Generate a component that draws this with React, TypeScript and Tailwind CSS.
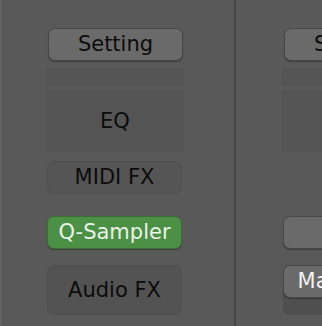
const font = { fontFamily: '"DejaVu Sans", "Liberation Sans", sans-serif' };

function GreyButton({ label, light }: { label?: string; light?: boolean }) {
  return (
    <div
      className={`ml-[1px] w-[135px] h-[33px] rounded-[7px] border border-[#474747] bg-[#6a6a6a] shadow-[0_1px_1px_rgba(0,0,0,0.3)] flex items-center justify-center whitespace-nowrap overflow-visible text-[21px] leading-none ${
        light ? 'text-[#f2f2f2]' : 'text-[#0c0c0c]'
      }`}
    >
      {label}
    </div>
  );
}

function Slot({ h, label }: { h: string; label?: string }) {
  return (
    <div className={`w-[138px] ${h} bg-[#545454] flex items-center justify-center text-[21px] leading-none text-[#0c0c0c]`}>
      {label}
    </div>
  );
}

function Strip({ pad, left }: { pad: string; left: boolean }) {
  return (
    <div className={`flex flex-col pt-[28px] ${pad} shrink-0`}>
      <div className="ml-[1px]">
        <GreyButton label="Setting" />
      </div>
      <div className="mt-[7px]">
        <Slot h="h-[18px]" />
      </div>
      <div className="mt-[4px]">
        <Slot h="h-[62px]" label={left ? 'EQ' : undefined} />
      </div>
      {left ? (
        <>
          <div className="mt-[9px] ml-[1px] w-[135px] h-[33px] rounded-[7px] border border-[#505050] bg-[#555555] flex items-center justify-center text-[21px] leading-none text-[#0c0c0c]">
            MIDI FX
          </div>
          <div className="mt-[22px] ml-[1px] w-[135px] h-[33px] rounded-[7px] border border-[#3b6e36] bg-[#4c9046] shadow-[0_1px_1px_rgba(0,0,0,0.3)] flex items-center justify-center text-[21px] leading-none text-[#e9f2e6]">
            Q-Sampler
          </div>
          <div className="mt-[16px] ml-[1px] w-[135px] h-[50px] rounded-[7px] border border-[#505050] bg-[#535353] flex items-center justify-center text-[21px] leading-none text-[#0c0c0c]">
            Audio FX
          </div>
        </>
      ) : (
        <>
          <div className="mt-[64px]">
            <GreyButton />
          </div>
          <div className="mt-[16px] ml-[1px] w-[135px] h-[50px] rounded-[7px] bg-[#4f4f4f]">
            <div className="-ml-[1px]">
              <GreyButton label="Main Outs" light />
            </div>
          </div>
        </>
      )}
    </div>
  );
}

export default function App() {
  return (
    <div className="w-[322px] h-[326px] overflow-hidden bg-[#595959] flex" style={font}>
      <div className="w-[2px] h-full bg-[#626262] shrink-0" />
      <div className="w-[232px] h-full shrink-0 flex">
        <Strip pad="pl-[44px]" left />
      </div>
      <div className="w-[2px] h-full bg-[#474747] shrink-0" />
      <div className="h-full shrink-0 flex">
        <Strip pad="pl-[46px]" left={false} />
      </div>
    </div>
  );
}
